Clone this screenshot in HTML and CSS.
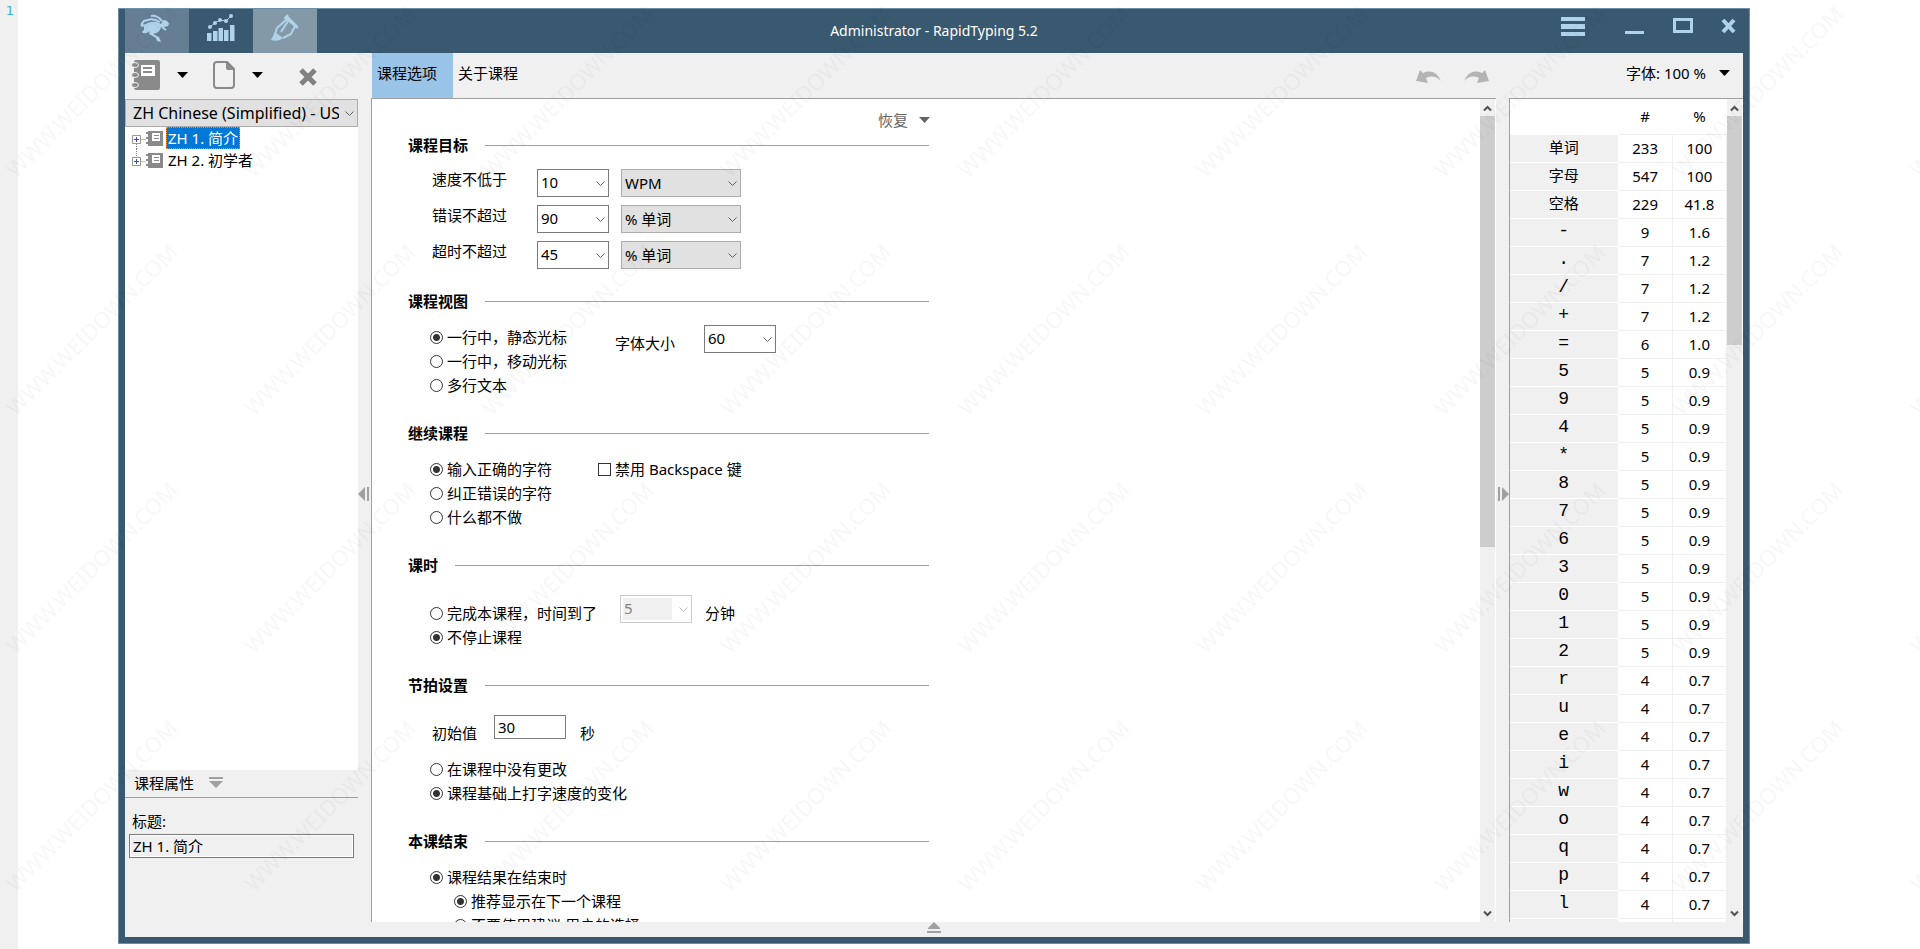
FILE: index.html
```
<!DOCTYPE html>
<html lang="zh-CN">
<head>
<meta charset="utf-8">
<title>Administrator - RapidTyping 5.2</title>
<link rel="stylesheet" href="styles.css">
</head>
<body>
<div class="gutter">1</div>
<div class="window">
  <header class="titlebar">
    <nav class="modes">
      <button class="mode mode-lesson" aria-label="Lesson">
        <svg width="30" height="28" viewBox="0 0 30 28"><path d="M4 16Q3 9 11 8Q17 7 21 10L23 6Q28 6 29 10Q28 13 24 13L21 13Q20 18 16 19L13 20L19 23L21 28L17 27L16 24L9 20L10 17Q7 20 3 19Q1 18 4 16Z"/><path class="limb" d="M22 7Q17 1 11 2M20 8Q13 4 8 6M1 11L4 7L8 6M1 12L5 11M22 13L26 16"/></svg>
      </button>
      <button class="mode mode-stats" aria-label="Statistics">
        <svg width="28" height="28" viewBox="0 0 28 28"><path d="M0 19h4.500v8H0zM6 17h4.500v10H6zM11.500 14H16v13h-4.500zM17 16h4.500v11H17zM23 11h4.500v16H23z"/><path class="trend" d="M3 13L8 9L13 6L19 7L24 2"/><circle cx="3" cy="13" r="2"/><circle cx="8" cy="9" r="2"/><circle cx="13" cy="6" r="2"/><circle cx="19" cy="7" r="2"/><circle cx="24" cy="2" r="2"/></svg>
      </button>
      <button class="mode mode-editor" aria-label="Editor">
        <svg width="28" height="28" viewBox="0 0 28 28"><path class="pen" d="M17 1L14 4L27 14M16 5L6 14L4 20M24 12L20 20L12 24M17 7L10 18"/><path class="pen pen-bar" d="M15 2L26 13"/><path d="M4 18L12 24Q8 28 0 26Z"/></svg>
      </button>
    </nav>
    <h1 class="caption">Administrator - RapidTyping 5.2</h1>
    <div class="controls">
      <button class="control control-menu" aria-label="Menu"><svg width="24" height="20" viewBox="0 0 24 20"><path d="M0 0h24v4H0zM0 7h24v5H0zM0 15h24v4H0z"/></svg></button>
      <button class="control" aria-label="Minimize"><svg width="20" height="20" viewBox="0 0 20 20"><path d="M0 14h19v3H0z"/></svg></button>
      <button class="control" aria-label="Maximize"><svg width="20" height="20" viewBox="0 0 20 20"><path d="M0 1h20v15H0zM3 4v9h14V4z" fill-rule="evenodd"/></svg></button>
      <button class="control" aria-label="Close"><svg width="15" height="20" viewBox="0 0 15 20"><path class="cross" d="M2 3L13 15M13 3L2 15"/></svg></button>
    </div>
  </header>

  <main class="workspace">
    <aside class="sidebar">
      <div class="toolbar sidebar-tools">
        <button class="tool" aria-label="Course"><svg class="glyph" width="30" height="30" viewBox="0 0 30 30"><path d="M5 0h22q2 0 2 2v26q0 2-2 2H5q-2 0-2-2V2q0-2 2-2zM10 5v11h14V5z" fill-rule="evenodd"/><path class="page" d="M10 5h14v11H10z"/><path d="M12 7h9v2h-9zM12 11h9v2h-9z"/><g class="ring"><ellipse cx="4" cy="5" rx="3.500" ry="2.500"/><ellipse cx="4" cy="15" rx="3.500" ry="2.500"/><ellipse cx="4" cy="25" rx="3.500" ry="2.500"/></g></svg></button>
        <button class="tool" aria-label="Course menu"><svg width="11" height="6" viewBox="0 0 11 6"><path d="M0 0h11L5.500 6z"/></svg></button>
        <button class="tool tool-page" aria-label="Lesson"><svg width="22" height="28" viewBox="0 0 22 28"><path class="sheet" d="M4 1h10l7 7v16q0 3-3 3H4q-3 0-3-3V4q0-3 3-3z"/><path class="glyph" d="M13 1h2l6 6v2h-6q-2 0-2-2z"/></svg></button>
        <button class="tool" aria-label="Lesson menu"><svg width="11" height="6" viewBox="0 0 11 6"><path d="M0 0h11L5.500 6z"/></svg></button>
        <button class="tool tool-delete" aria-label="Delete"><svg width="18" height="18" viewBox="0 0 18 18"><path class="thick" d="M2 2L16 16M16 2L2 16"/></svg></button>
      </div>
      <span class="pick pick-course"><select aria-label="Course language"><option>ZH Chinese (Simplified) - US</option></select><svg class="chevron" width="9" height="6" viewBox="0 0 9 6"><path d="M.5 .5L4.500 4.500L8.500 .5"/></svg></span>
      <ul class="tree">
        <li class="node">
          <svg width="32" height="22" viewBox="0 0 32 22"><path class="dots" d="M10.500 12.500H15M5.500 17V22"/><path class="box" d="M1.500 8.500h8v8h-8z"/><path class="plus" d="M3 12.500h5M5.500 10v5"/><path class="glyph" d="M17 4h15v15H17zM21 6v8h8V6z" fill-rule="evenodd"/><path class="glyph" d="M23 8h5v1h-5zM23 11h5v1h-5zM15 5h4v2h-4zM15 10h4v2h-4zM15 15h4v2h-4z"/></svg>
          <button class="node-name selected">ZH 1. 简介</button>
        </li>
        <li class="node">
          <svg width="32" height="22" viewBox="0 0 32 22"><path class="dots" d="M10.500 12.500H15M5.500 0V8"/><path class="box" d="M1.500 8.500h8v8h-8z"/><path class="plus" d="M3 12.500h5M5.500 10v5"/><path class="glyph" d="M17 4h15v15H17zM21 6v8h8V6z" fill-rule="evenodd"/><path class="glyph" d="M23 8h5v1h-5zM23 11h5v1h-5zM15 5h4v2h-4zM15 10h4v2h-4zM15 15h4v2h-4z"/></svg>
          <button class="node-name">ZH 2. 初学者</button>
        </li>
      </ul>
      <section class="properties">
        <h2 class="properties-title">课程属性 <svg class="fold" width="14" height="12" viewBox="0 0 14 12"><path d="M0 0h14v2H0zM0 4h14L7 11z"/></svg></h2>
        <div class="properties-body">
          <label for="lesson-title">标题:</label>
          <input id="lesson-title" class="title-field" type="text" value="ZH 1. 简介" readonly>
        </div>
      </section>
    </aside>

    <button class="splitter" aria-label="Hide courses"><svg width="11" height="14" viewBox="0 0 11 14"><path d="M0 7L7 0v14zM9 0h2v14H9z"/></svg></button>

    <section class="editor">
      <div class="toolbar editor-tools">
        <button class="tab tab-active">课程选项</button>
        <button class="tab">关于课程</button>
        <div class="history">
          <button class="tool" aria-label="Undo"><svg width="25" height="13" viewBox="0 0 25 13"><path d="M4 0L7 3Q19-2 25 11Q18 4 10 8L12 13L0 11Z"/></svg></button>
          <button class="tool" aria-label="Redo"><svg width="25" height="13" viewBox="0 0 25 13"><path d="M21 0L18 3Q6-2 0 11Q7 4 15 8L13 13L25 11Z"/></svg></button>
        </div>
      </div>
      <div class="pane">
        <form class="options">
          <button type="button" class="restore">恢复 <svg width="11" height="6" viewBox="0 0 11 6"><path d="M0 0h11L5.500 6z"/></svg></button>

          <section>
            <h2 class="group-title">课程目标</h2>
            <div class="goals">
              <label for="speed">速度不低于</label>
              <span class="pick"><select id="speed"><option>10</option></select><svg class="chevron" width="9" height="6" viewBox="0 0 9 6"><path d="M.5 .5L4.500 4.500L8.500 .5"/></svg></span>
              <span class="pick pick-unit"><select aria-label="速度单位"><option>WPM</option></select><svg class="chevron" width="9" height="6" viewBox="0 0 9 6"><path d="M.5 .5L4.500 4.500L8.500 .5"/></svg></span>
              <label for="errors">错误不超过</label>
              <span class="pick"><select id="errors"><option>90</option></select><svg class="chevron" width="9" height="6" viewBox="0 0 9 6"><path d="M.5 .5L4.500 4.500L8.500 .5"/></svg></span>
              <span class="pick pick-unit"><select aria-label="错误单位"><option>% 单词</option></select><svg class="chevron" width="9" height="6" viewBox="0 0 9 6"><path d="M.5 .5L4.500 4.500L8.500 .5"/></svg></span>
              <label for="overtime">超时不超过</label>
              <span class="pick"><select id="overtime"><option>45</option></select><svg class="chevron" width="9" height="6" viewBox="0 0 9 6"><path d="M.5 .5L4.500 4.500L8.500 .5"/></svg></span>
              <span class="pick pick-unit"><select aria-label="超时单位"><option>% 单词</option></select><svg class="chevron" width="9" height="6" viewBox="0 0 9 6"><path d="M.5 .5L4.500 4.500L8.500 .5"/></svg></span>
            </div>
          </section>

          <section>
            <h2 class="group-title">课程视图</h2>
            <div class="group view-group">
              <div class="choices">
                <label><input type="radio" name="view" checked>一行中，静态光标</label>
                <label><input type="radio" name="view">一行中，移动光标</label>
                <label><input type="radio" name="view">多行文本</label>
              </div>
              <label class="low-label" for="font-size">字体大小</label>
              <span class="pick"><select id="font-size"><option>60</option></select><svg class="chevron" width="9" height="6" viewBox="0 0 9 6"><path d="M.5 .5L4.500 4.500L8.500 .5"/></svg></span>
            </div>
          </section>

          <section>
            <h2 class="group-title">继续课程</h2>
            <div class="group continue-group">
              <div class="choices">
                <label><input type="radio" name="continue" checked>输入正确的字符</label>
                <label><input type="radio" name="continue">纠正错误的字符</label>
                <label><input type="radio" name="continue">什么都不做</label>
              </div>
              <div class="choices">
                <label><input type="checkbox">禁用 Backspace 键</label>
              </div>
            </div>
          </section>

          <section>
            <h2 class="group-title">课时</h2>
            <div class="group duration-group">
              <div class="choices">
                <label><input type="radio" name="duration">完成本课程，时间到了</label>
                <label><input type="radio" name="duration" checked>不停止课程</label>
              </div>
              <span class="pick"><select id="minutes" disabled><option>5</option></select><svg class="chevron" width="9" height="6" viewBox="0 0 9 6"><path d="M.5 .5L4.500 4.500L8.500 .5"/></svg></span>
              <label class="low-label" for="minutes">分钟</label>
            </div>
          </section>

          <section>
            <h2 class="group-title">节拍设置</h2>
            <div class="beat">
              <label class="low-label" for="beat">初始值</label>
              <input id="beat" class="number" type="text" value="30">
              <span class="low-label">秒</span>
            </div>
            <div class="choices beat-choices">
              <label><input type="radio" name="beat-mode">在课程中没有更改</label>
              <label><input type="radio" name="beat-mode" checked>课程基础上打字速度的变化</label>
            </div>
          </section>

          <section>
            <h2 class="group-title">本课结束</h2>
            <div class="group">
              <div class="choices">
                <label><input type="radio" name="finish" checked>课程结果在结束时</label>
                <div class="choices nested">
                  <label><input type="radio" name="next" checked>推荐显示在下一个课程</label>
                  <label><input type="radio" name="next">不要使用建议,用户的选择</label>
                </div>
              </div>
            </div>
          </section>
        </form>
        <div class="scrollbar">
          <svg class="arrow" width="15" height="17" viewBox="0 0 15 17"><path d="M4 11.500L7.500 8L11 11.500"/></svg>
          <div class="track"><div class="thumb" style="height:54.600%"></div></div>
          <svg class="arrow" width="15" height="17" viewBox="0 0 15 17"><path d="M4 6.500L7.500 10L11 6.500"/></svg>
        </div>
      </div>
    </section>

    <button class="splitter splitter-right" aria-label="Hide statistics"><svg width="11" height="14" viewBox="0 0 11 14"><path d="M11 7L4 0v14zM0 0h2v14H0z"/></svg></button>

    <aside class="stats">
      <div class="toolbar stats-tools">
        <button class="zoom">字体: 100 % <svg width="11" height="6" viewBox="0 0 11 6"><path d="M0 0h11L5.500 6z"/></svg></button>
      </div>
      <div class="pane">
        <div class="table-view">
          <table>
            <thead><tr><td></td><th scope="col">#</th><th scope="col">%</th></tr></thead>
            <tbody>
              <tr class="words"><th scope="row">单词</th><td>233</td><td>100</td></tr>
              <tr class="words"><th scope="row">字母</th><td>547</td><td>100</td></tr>
              <tr class="words"><th scope="row">空格</th><td>229</td><td>41.8</td></tr>
              <tr><th scope="row">-</th><td>9</td><td>1.6</td></tr>
              <tr><th scope="row">.</th><td>7</td><td>1.2</td></tr>
              <tr><th scope="row">/</th><td>7</td><td>1.2</td></tr>
              <tr><th scope="row">+</th><td>7</td><td>1.2</td></tr>
              <tr><th scope="row">=</th><td>6</td><td>1.0</td></tr>
              <tr><th scope="row">5</th><td>5</td><td>0.9</td></tr>
              <tr><th scope="row">9</th><td>5</td><td>0.9</td></tr>
              <tr><th scope="row">4</th><td>5</td><td>0.9</td></tr>
              <tr><th scope="row">*</th><td>5</td><td>0.9</td></tr>
              <tr><th scope="row">8</th><td>5</td><td>0.9</td></tr>
              <tr><th scope="row">7</th><td>5</td><td>0.9</td></tr>
              <tr><th scope="row">6</th><td>5</td><td>0.9</td></tr>
              <tr><th scope="row">3</th><td>5</td><td>0.9</td></tr>
              <tr><th scope="row">0</th><td>5</td><td>0.9</td></tr>
              <tr><th scope="row">1</th><td>5</td><td>0.9</td></tr>
              <tr><th scope="row">2</th><td>5</td><td>0.9</td></tr>
              <tr><th scope="row">r</th><td>4</td><td>0.7</td></tr>
              <tr><th scope="row">u</th><td>4</td><td>0.7</td></tr>
              <tr><th scope="row">e</th><td>4</td><td>0.7</td></tr>
              <tr><th scope="row">i</th><td>4</td><td>0.7</td></tr>
              <tr><th scope="row">w</th><td>4</td><td>0.7</td></tr>
              <tr><th scope="row">o</th><td>4</td><td>0.7</td></tr>
              <tr><th scope="row">q</th><td>4</td><td>0.7</td></tr>
              <tr><th scope="row">p</th><td>4</td><td>0.7</td></tr>
              <tr><th scope="row">l</th><td>4</td><td>0.7</td></tr>
              <tr><th scope="row"></th><td></td><td></td></tr>
            </tbody>
          </table>
        </div>
        <div class="scrollbar">
          <svg class="arrow" width="15" height="17" viewBox="0 0 15 17"><path d="M4 11.500L7.500 8L11 11.500"/></svg>
          <div class="track"><div class="thumb" style="height:29%"></div></div>
          <svg class="arrow" width="15" height="17" viewBox="0 0 15 17"><path d="M4 6.500L7.500 10L11 6.500"/></svg>
        </div>
      </div>
    </aside>
  </main>
  <footer class="bottom"><button class="raise" aria-label="Show keyboard"><svg width="14" height="11" viewBox="0 0 14 11"><path d="M7 0L13 6v1H1V6zM0 9h14v2H0z"/></svg></button></footer>
</div>
<svg class="watermark" aria-hidden="true">
  <defs><pattern id="mark" width="238" height="238" patternUnits="userSpaceOnUse"><text x="0" y="0" transform="translate(16 179) rotate(-45)">WWW.WEIDOWN.COM</text></pattern></defs>
  <rect width="100%" height="100%" fill="url(#mark)"/>
</svg>
</body>
</html>
```
FILE: styles.css
```
* { box-sizing: border-box; }

:root {
  --frame: #38596f;
  --frame-edge: #6b8fa6;
  --ice: #b0d3ec;
  --face: #f0f0f0;
  --line: #a0a0a0;
  --glyph: #8a8a8a;
}

body {
  display: flex;
  height: 100vh;
  margin: 0;
  overflow: hidden;
  background: #fff;
  color: #000;
  font: 15px/20px "Noto Sans", "Noto Sans CJK SC", sans-serif;
}

button, input, select {
  margin: 0;
  font: inherit;
  color: inherit;
}

button {
  padding: 0;
  border: 0;
  background: none;
}

h1, h2, ul { margin: 0; padding: 0; font: inherit; }
svg { display: block; flex: none; }

.gutter {
  flex: none;
  width: 18px;
  padding: 2px 4px;
  background: var(--face);
  color: #42b0d5;
  font: 13px/18px "DejaVu Sans", sans-serif;
  text-align: right;
}

.window {
  display: flex;
  flex: 1;
  flex-direction: column;
  min-width: 0;
  margin: 8px 170px 5px 100px;
  border: 1px solid var(--frame-edge);
  background: var(--face);
  box-shadow: inset 0 0 0 6px var(--frame);
  padding: 0 6px 6px;
}

/* Title bar */
.titlebar {
  display: grid;
  flex: none;
  grid-template-columns: 1fr auto 1fr;
  height: 44px;
  background: var(--frame);
  color: #fff;
}
.modes { display: flex; }
.mode {
  display: flex;
  justify-content: center;
  width: 64px;
  padding-top: 5px;
  fill: var(--ice);
}
.mode-lesson { padding-right: 4px; background: #667e93; }
.mode-editor { background: #8399a7; }
.limb { fill: none; stroke: var(--ice); stroke-width: 2; }
.trend { fill: none; stroke: var(--ice); stroke-width: 1; }
.pen { fill: none; stroke: var(--ice); stroke-width: 2; }
.pen-bar { stroke-width: 3; }
.caption { padding-top: 12px; font-size: 14px; }
.controls {
  display: flex;
  justify-content: flex-end;
  gap: 28px;
  padding: 8px 7px 0 0;
}
.control { display: flex; align-items: flex-start; fill: var(--ice); }
.control-menu { margin-right: 12px; }
.cross { stroke: var(--ice); stroke-width: 4; }

/* Workspace columns */
.workspace {
  display: grid;
  flex: 1;
  grid-template-columns: 233px 13px 1fr 13px 234px;
  min-height: 0;
}
.sidebar, .editor, .stats {
  display: flex;
  flex-direction: column;
  min-width: 0;
  min-height: 0;
}
.toolbar { display: flex; flex: none; height: 45px; }
.tool { display: flex; align-items: center; }
.splitter {
  display: flex;
  align-items: center;
  padding-bottom: 28px;
  padding-top: 41px;
  fill: var(--line);
}
.splitter-right { justify-content: flex-end; }
.pane {
  display: flex;
  flex: 1;
  min-height: 0;
  border: solid var(--line);
  border-width: 1px 0 0 1px;
  background: #fff;
}

/* Sidebar */
.sidebar { margin-bottom: -15px; }
.sidebar-tools { height: 46px; padding: 0 0 2px 6px; gap: 16px; }
.tool-page { margin: 0 1px 0 9px; }
.tool-delete { margin: 4px 0 0 20px; }
.glyph { fill: var(--glyph); stroke: none; }
.page { fill: #fff; }
.ring { fill: var(--glyph); stroke: var(--face); stroke-width: 1; }
.sheet { fill: none; stroke: var(--glyph); stroke-width: 2; }
.thick { stroke: #808080; stroke-width: 5; }

.pick { position: relative; display: block; width: 72px; height: 28px; }
.pick select {
  appearance: none;
  width: 100%;
  height: 100%;
  padding: 0 18px 2px 3px;
  border: 1px solid #7a7a7a;
  border-radius: 0;
  background: #fff;
}
.chevron {
  position: absolute;
  top: 12px;
  right: 4px;
  fill: none;
  stroke: #606060;
  pointer-events: none;
}
.pick-unit { width: 120px; }
.pick-unit select, .pick-course select { padding-bottom: 0; background: #e1e1e1; border-color: #adadad; }
.pick-course { flex: none; width: auto; }
.pick-course select { padding-left: 7px; font-size: 16px; }
.pick select:disabled {
  border-color: #ccc;
  background: linear-gradient(#f0f0f0, #f0f0f0) 2px 2px / 49px 22px no-repeat #fff;
  color: #838383;
  opacity: 1;
}
select:disabled + .chevron { stroke: #bfbfbf; }

.tree {
  flex: 1;
  min-height: 0;
  padding-left: 6px;
  background: #fff;
  list-style: none;
}
.node { display: flex; gap: 3px; height: 22px; }
.node-name { padding: 0 1px; border: 1px solid transparent; line-height: 20px; }
.selected { border: 1px dotted #ff8728; background: #0078d7; color: #fff; }
.dots { fill: none; stroke: #808080; stroke-dasharray: 1 1; }
.box { fill: #fff; stroke: #969696; }
.plus { stroke: #3a4f9a; }

.properties { height: 167px; }
.properties-title {
  display: flex;
  align-items: center;
  gap: 15px;
  height: 28px;
  padding: 0 0 1px 9px;
  border-bottom: 1px solid var(--line);
}
.fold { fill: var(--line); }
.properties-body { display: grid; gap: 3px; padding: 13px 4px 0; }
.properties-body label { padding-left: 3px; }
.title-field {
  width: 100%;
  height: 24px;
  padding: 0 3px 1px;
  border: 1px solid #7a7a7a;
  outline: 1px solid #fff;
  outline-offset: -2px;
  background: var(--face);
}

/* Editor */
.tab { width: 73px; padding: 0 5px 5px; text-align: left; }
.tab-active { width: 82px; background: #99c4e8; border-left: 1px solid var(--face); }
.history { display: flex; gap: 23px; margin: 2px 7px 0 auto; fill: #b4b4b4; }
.editor .pane { padding-right: 1px; }
.options {
  flex: 1;
  min-width: 0;
  overflow: hidden;
  padding: 10px 0 0 36px;
}
.options section { width: 521px; }
.restore {
  display: flex;
  align-items: center;
  justify-content: flex-end;
  gap: 11px;
  width: 522px;
  height: 24px;
  padding-bottom: 2px;
  color: #666;
  fill: #666;
}
.group-title {
  display: flex;
  align-items: center;
  gap: 17px;
  height: 24px;
  font-weight: bold;
}
.group-title::after { content: ""; flex: 1; height: 1px; background: var(--line); }
.goals {
  display: grid;
  grid-template-columns: 93px 72px 120px;
  gap: 8px 12px;
  padding: 12px 0 20px 24px;
}
.group { display: flex; padding: 12px 0 24px 22px; }
.view-group .choices { width: 185px; }
.view-group .pick { margin-left: 29px; }
.continue-group .choices { width: 168px; }
.duration-group { padding-top: 18px; }
.duration-group .choices { width: 190px; padding-top: 6px; }
.duration-group .low-label { margin-left: 13px; }
.low-label { padding-top: 8px; }
.choices { display: grid; align-content: start; }
.choices label {
  display: flex;
  align-items: center;
  gap: 4px;
  height: 24px;
  white-space: nowrap;
}
.choices.nested { padding-left: 24px; }
input[type="radio"], input[type="checkbox"] {
  appearance: none;
  flex: none;
  width: 13px;
  height: 13px;
  border: 1px solid #333;
  background: #fff;
}
input[type="radio"] { border-radius: 50%; }
input[type="radio"]:checked { background: radial-gradient(#333 3px, #fff 4px); }
.beat { display: flex; padding: 18px 0 14px 24px; }
.number {
  width: 72px;
  height: 24px;
  margin: 0 14px 0 17px;
  padding: 0 3px;
  border: 1px solid #7a7a7a;
}
.beat-choices { padding: 0 0 24px 22px; }

/* Scroll bars */
.scrollbar { display: flex; flex: none; flex-direction: column; width: 15px; background: var(--face); }
.track { flex: 1; }
.thumb { background: #cdcdcd; }
.arrow { fill: none; stroke: #505050; stroke-width: 2; }

/* Character statistics */
.zoom { display: flex; align-items: center; gap: 13px; margin: 0 13px 0 auto; padding-bottom: 5px; }
.stats .pane { padding-right: 1px; }
.table-view { flex: 1; min-width: 0; overflow: hidden; }
table { width: 100%; table-layout: fixed; border-spacing: 0; text-align: center; }
th, td { height: 28px; padding: 0 0 2px; border: solid #efefef; border-width: 0 1px 1px 0; font-weight: normal; }
thead th, thead td { height: 36px; border-right-color: #fff; }
thead td { width: 50%; border-bottom-color: #fff; }
tbody th {
  padding-bottom: 4px;
  border-color: #fff;
  background: var(--face);
  font: 18px/20px "Liberation Mono", monospace;
}
.words th { font: 15px/20px "Noto Sans CJK SC", sans-serif; }

.bottom { display: flex; flex: none; justify-content: center; height: 15px; }
.raise { display: flex; z-index: 1; fill: var(--line); }

.watermark {
  position: fixed;
  inset: 0;
  width: 100%;
  height: 100%;
  pointer-events: none;
  font: 22px "Noto Sans", sans-serif;
  fill: #000;
  opacity: .03;
}
```
